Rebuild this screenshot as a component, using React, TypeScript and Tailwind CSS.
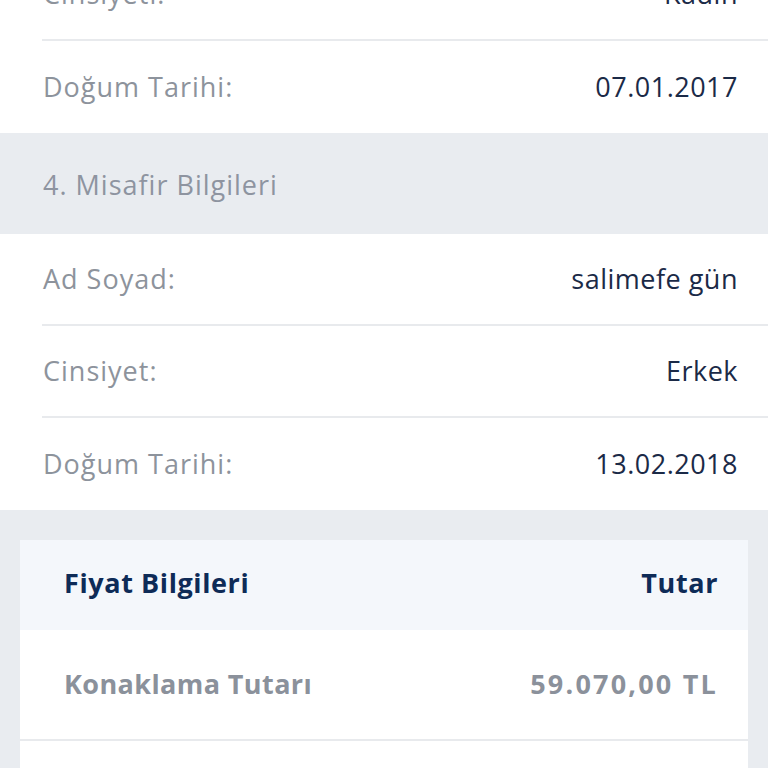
const font = { fontFamily: '"Open Sans", "Noto Sans", sans-serif' };

type Row = { label: string; value: string };

function InfoRow({ row, last }: { row: Row; last?: boolean }) {
  return (
    <div className="pl-[42px]">
      <div
        className={`flex h-[92px] items-center justify-between pr-[30px] ${
          last ? '' : 'border-b-2 border-[#e8eaed]'
        }`}
      >
        <span className="pl-px text-[27px] tracking-[1px] text-[#8d939c]">{row.label}</span>
        <span className="text-[27px] tracking-[0.5px] text-[#1b2a47]">{row.value}</span>
      </div>
    </div>
  );
}

export default function App() {
  const guest3: Row[] = [
    { label: 'Cinsiyeti:', value: 'Kadın' },
    { label: 'Doğum Tarihi:', value: '07.01.2017' },
  ];
  const guest4: Row[] = [
    { label: 'Ad Soyad:', value: 'salimefe gün' },
    { label: 'Cinsiyet:', value: 'Erkek' },
    { label: 'Doğum Tarihi:', value: '13.02.2018' },
  ];

  return (
    <div className="h-[768px] w-[768px] overflow-hidden bg-[#e9ecf0]" style={font}>
      <div className="-mt-[51px] bg-white">
        {guest3.map((r, i) => (
          <InfoRow key={r.label} row={r} last={i === guest3.length - 1} />
        ))}
      </div>

      <div className="flex h-[101px] items-center pl-[43px] pt-[4px] text-[27px] tracking-[1px] text-[#8e94a0]">
        4. Misafir Bilgileri
      </div>

      <div className="bg-white">
        {guest4.map((r, i) => (
          <InfoRow key={r.label} row={r} last={i === guest4.length - 1} />
        ))}
      </div>

      <div className="px-5 pt-[30px]">
        <div className="bg-white">
          <div className="flex h-[90px] items-center justify-between bg-[#f4f7fb] pb-[3px] pl-[44px] pr-[30px] text-[27px] font-bold tracking-[0.6px] text-[#0e2b57]">
            <span>Fiyat Bilgileri</span>
            <span>Tutar</span>
          </div>
          <div className="flex h-[111px] items-center justify-between border-b-2 border-[#e8eaed] pl-[44px] pr-[30px] text-[27px] font-bold tracking-[0.4px] text-[#8b919b]">
            <span>Konaklama Tutarı</span>
            <span className="tracking-[2.2px]">59.070,00 TL</span>
          </div>
          <div className="h-[100px]" />
        </div>
      </div>
    </div>
  );
}
